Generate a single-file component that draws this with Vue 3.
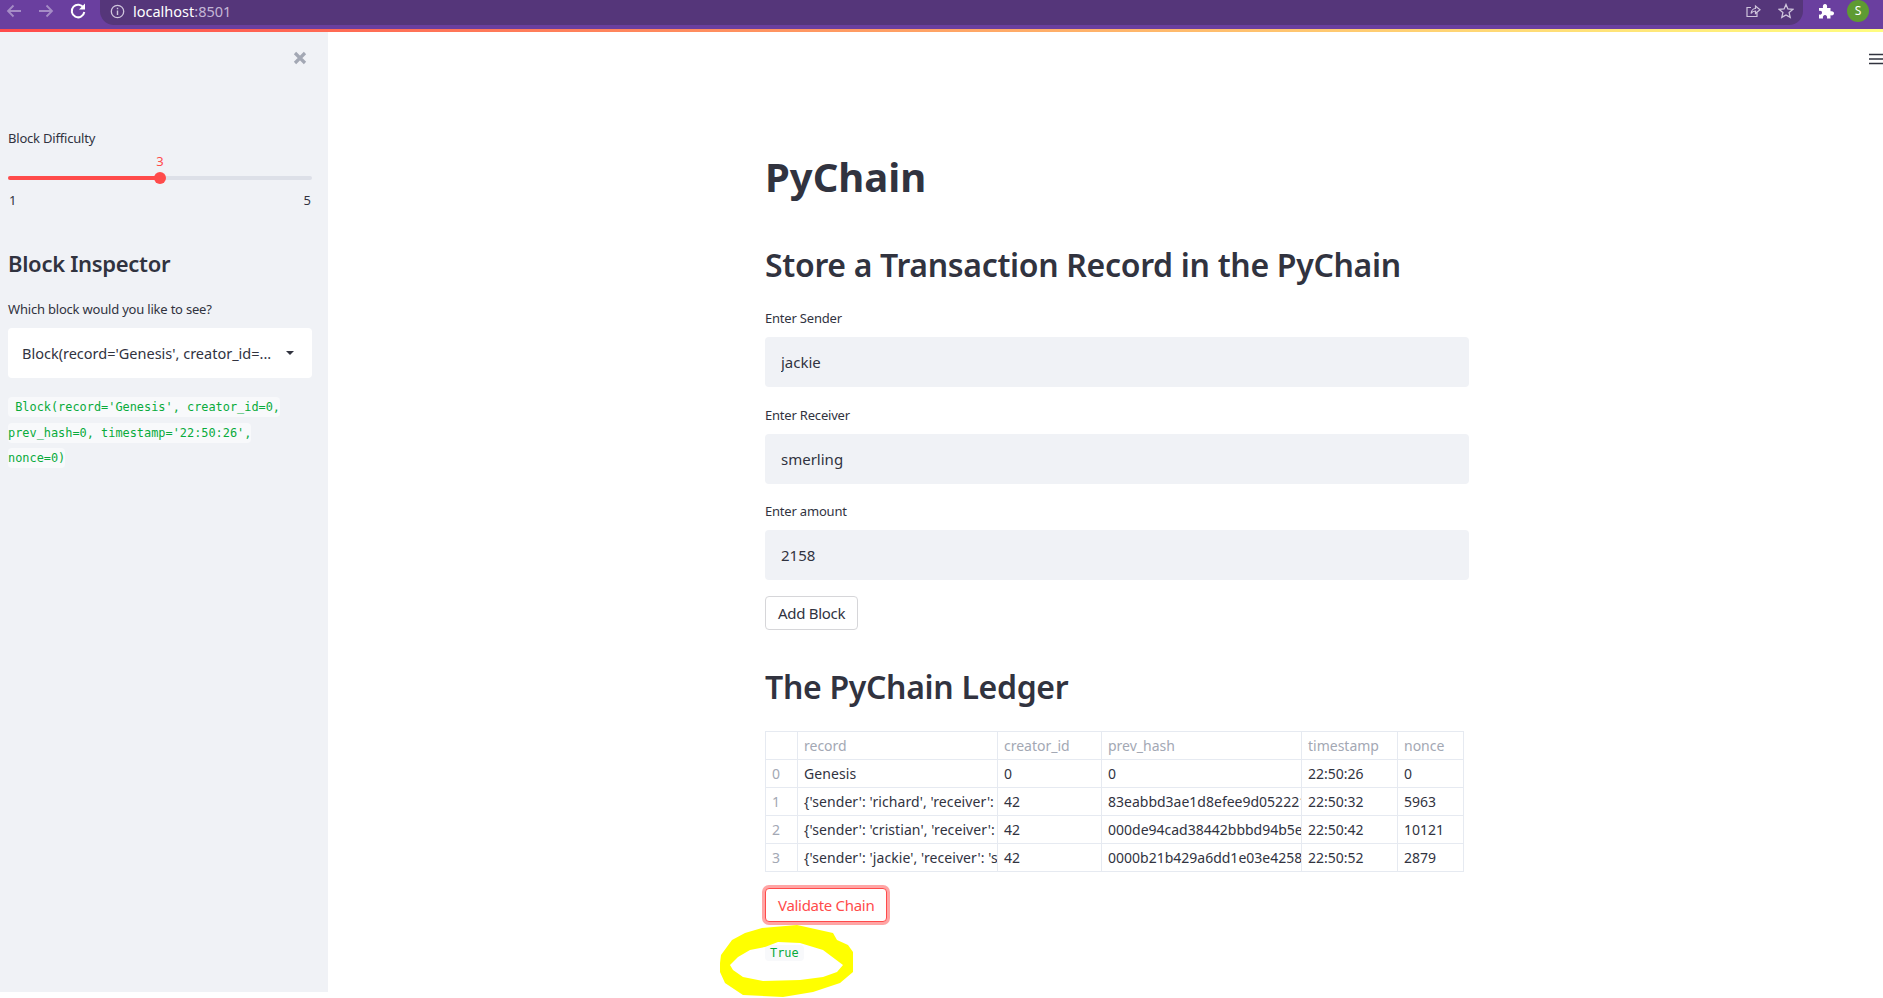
<script setup>
import { ref, computed } from 'vue'

const difficulty = ref(3)
const sliderPct = computed(() => ((difficulty.value - 1) / 4) * 100)

const fields = [
  { label: 'Enter Sender', value: 'jackie' },
  { label: 'Enter Receiver', value: 'smerling' },
  { label: 'Enter amount', value: '2158' },
]

const columns = ['', 'record', 'creator_id', 'prev_hash', 'timestamp', 'nonce']

const rows = [
  ['0', 'Genesis', '0', '0', '22:50:26', '0'],
  ['1', "{'sender': 'richard', 'receiver': 'cristian', 'amount': 100}", '42', '83eabbd3ae1d8efee9d052221f7c0a', '22:50:32', '5963'],
  ['2', "{'sender': 'cristian', 'receiver': 'jackie', 'amount': 250}", '42', '000de94cad38442bbbd94b5e61a2c7', '22:50:42', '10121'],
  ['3', "{'sender': 'jackie', 'receiver': 'smerling', 'amount': 2158}", '42', '0000b21b429a6dd1e03e42587d19fe', '22:50:52', '2879'],
]
</script>

<template>
  <div class="page">
    <div class="chrome">
      <svg class="nav dim" width="18" height="18" viewBox="0 0 18 18"><path d="M16 9H3M8.500 3.500 3 9l5.500 5.500" fill="none" stroke="currentColor" stroke-width="1.800"/></svg>
      <svg class="nav dim" width="18" height="18" viewBox="0 0 18 18"><path d="M2 9h13M9.500 3.500 15 9l-5.500 5.500" fill="none" stroke="currentColor" stroke-width="1.800"/></svg>
      <svg class="nav" width="18" height="18" viewBox="0 0 18 18"><path d="M14.600 6A6.300 6.300 0 1 0 15.300 10" fill="none" stroke="#fff" stroke-width="2"/><path d="M16 1.500V7.500H10Z" fill="#fff"/></svg>
      <div class="omnibox">
        <svg width="15" height="15" viewBox="0 0 15 15"><circle cx="7.500" cy="7.500" r="6.200" fill="none" stroke="#cfc5dc" stroke-width="1.300"/><path d="M7.500 6.500v4.500M7.500 3.800v1.400" stroke="#cfc5dc" stroke-width="1.400"/></svg>
        <span class="url">localhost<span class="port">:8501</span></span>
        <span class="spacer"></span>
        <svg width="16" height="16" viewBox="0 0 16 16"><path d="M12 9.500V13.500H2V4.500H6M6 10.500C6.500 7 9 5.500 10.500 5.500V3L15 6.800 10.500 10.500V8C8.500 8 7 9 6 10.500Z" fill="none" stroke="#cfc5dc" stroke-width="1.200"/></svg>
        <svg width="16" height="16" viewBox="0 0 16 16"><path d="M8 1.500 9.900 6 14.800 6.400 11.100 9.600 12.200 14.400 8 11.900 3.800 14.400 4.900 9.600 1.200 6.400 6.100 6Z" fill="none" stroke="#cfc5dc" stroke-width="1.300"/></svg>
      </div>
      <svg class="puzzle" width="16" height="16" viewBox="0 0 16 16"><path d="M1 5H5C4.400 2.500 5.500 1 7 1S9.600 2.500 9 5H12.500V8.300C15 7.800 16 9 16 10.300S15 12.800 12.500 12.300V15.500H9C9.500 13.200 8.400 12 7 12S4.500 13.200 5 15.500H1V11.500C3 12 4 11 4 9.700S3 7.500 1 8Z" fill="#fff"/></svg>
      <div class="avatar">S</div>
    </div>
    <div class="decoration"></div>

    <div class="body">
      <aside class="sidebar">
        <svg class="close" width="14" height="14" viewBox="0 0 14 14"><path d="M2 2 12 12M12 2 2 12" stroke="#a3a8b4" stroke-width="3.200"/></svg>

        <label class="widget-label difficulty">Block Difficulty</label>
        <div class="slider">
          <span class="slider-value" :style="{ left: sliderPct + '%' }">{{ difficulty }}</span>
          <div class="track">
            <div class="fill" :style="{ width: sliderPct + '%' }"></div>
            <div class="thumb" :style="{ left: sliderPct + '%' }"></div>
          </div>
        </div>
        <div class="ticks"><span>1</span><span>5</span></div>

        <h3 class="side-title">Block Inspector</h3>
        <label class="widget-label">Which block would you like to see?</label>
        <div class="select">
          <span class="select-text">Block(record='Genesis', creator_id=...</span>
          <span class="caret"></span>
        </div>
        <p class="code-block">
          <code>&nbsp;Block(record='Genesis', creator_id=0, prev_hash=0, timestamp='22:50:26', nonce=0)</code>
        </p>
      </aside>

      <main class="main">
        <svg class="burger" width="14" height="12" viewBox="0 0 14 12"><path d="M0 1.500H14M0 6H14M0 10.500H14" stroke="#31333f" stroke-width="1.600"/></svg>

        <div class="content">
          <h1>PyChain</h1>
          <h2 class="store">Store a Transaction Record in the PyChain</h2>

          <div v-for="f in fields" :key="f.label" class="field">
            <label class="widget-label">{{ f.label }}</label>
            <input class="text-input" type="text" :value="f.value" readonly />
          </div>

          <button type="button" class="btn add">Add Block</button>

          <h2 class="ledger">The PyChain Ledger</h2>

          <table class="frame">
            <colgroup>
              <col class="c-idx" /><col class="c-rec" /><col class="c-cre" /><col class="c-pre" /><col class="c-tim" /><col class="c-non" />
            </colgroup>
            <thead>
              <tr><th v-for="c in columns" :key="c">{{ c }}</th></tr>
            </thead>
            <tbody>
              <tr v-for="r in rows" :key="r[0]">
                <td v-for="(cell, i) in r" :key="i" :class="{ idx: i === 0, rec: i === 1 }">{{ cell }}</td>
              </tr>
            </tbody>
          </table>

          <button type="button" class="btn validate">Validate Chain</button>
          <p class="result"><code>True</code></p>
        </div>

        <svg class="scribble" width="134" height="73" viewBox="0 0 134 73">
          <path fill="#ffff00" fill-rule="evenodd" d="M0 38 1 30 12 15 25 8 42 3 77 0 113 8 117 15 128 20 133 27 133 47 120 58 93 67 63 72 23 70 5 58 0 47ZM10 40 18 32 30 25 45 22 58 17 80 18 103 25 123 40 117 47 103 52 80 55 43 56 23 52 13 45Z"/>
        </svg>
      </main>
    </div>
  </div>
</template>

<style>
html, body { margin: 0; background: #fff; overflow: hidden; }
</style>

<style scoped>
.page {
  height: 998px;
  display: flex;
  flex-direction: column;
  font-family: "Noto Sans", "Liberation Sans", sans-serif;
  color: #31333f;
  overflow: hidden;
}

/* browser bar */
.chrome {
  height: 29px;
  flex: none;
  box-sizing: border-box;
  display: flex;
  align-items: center;
  background: #6a3f9f;
  padding: 0 0 7px 5px;
}
.nav { margin-right: 14px; flex: none; }
.nav.dim { color: #a58cc6; }
.omnibox {
  height: 28px;
  margin-left: -1px;
  flex: 1;
  display: flex;
  align-items: center;
  gap: 8px;
  padding: 0 9px 0 10px;
  background: #55367a;
  border-radius: 0 0 14px 14px;
}
.url { color: #fff; font-size: 14.500px; }
.port { color: #c4b6d6; }
.spacer { flex: 1; }
.omnibox svg + svg { margin-left: 9px; }
.puzzle { margin: 0 0 0 15px; flex: none; }
.avatar {
  width: 22px;
  height: 22px;
  margin: 0 14px 0 13px;
  flex: none;
  border-radius: 50%;
  background: #5e9b32;
  color: #fff;
  font-size: 12px;
  line-height: 22px;
  text-align: center;
}
.decoration {
  height: 3px;
  flex: none;
  background: linear-gradient(90deg, #ff4b4b, #fffd80);
}

.body { flex: none; height: 960px; display: flex; }

/* sidebar */
.sidebar {
  position: relative;
  width: 328px;
  flex: none;
  box-sizing: border-box;
  padding: 97px 16px 0 8px;
  background: #f0f2f6;
}
.close { position: absolute; top: 19px; right: 21px; }
.widget-label {
  display: block;
  font-size: 13px;
  line-height: 18px;
  letter-spacing: -0.2px;
}
.slider { position: relative; margin-top: 23px; height: 16px; }
.slider-value {
  position: absolute;
  top: -18px;
  transform: translateX(-50%);
  font-size: 13px;
  line-height: 18px;
  color: #ff4b4b;
}
.track {
  position: absolute;
  top: 6px;
  left: 0;
  right: 0;
  height: 4px;
  border-radius: 2px;
  background: #dde0e8;
}
.fill { height: 100%; border-radius: 2px; background: #ff4b4b; }
.thumb {
  position: absolute;
  top: -4px;
  width: 12px;
  height: 12px;
  margin-left: -6px;
  border-radius: 50%;
  background: #ff4b4b;
}
.ticks {
  display: flex;
  justify-content: space-between;
  margin-top: 5px;
  padding: 0 1px;
  font-size: 13px;
  line-height: 18px;
}
.side-title {
  margin: 38px 0 21px;
  font-size: 22px;
  line-height: 32px;
  font-weight: 600;
  letter-spacing: -0.3px;
}
.select {
  display: flex;
  align-items: center;
  height: 50px;
  margin-top: 10px;
  padding: 0 18px 0 14px;
  background: #fff;
  border-radius: 4px;
}
.select-text {
  flex: 1;
  font-size: 14.500px;
  white-space: nowrap;
  overflow: hidden;
}
.caret {
  width: 0;
  height: 0;
  margin-left: 10px;
  border: 4px solid transparent;
  border-top: 4px solid #31333f;
  border-bottom: 0;
}
.code-block {
  margin: 17px 0 0;
  font-family: "DejaVu Sans Mono", "Liberation Mono", monospace;
  font-size: 11.900px;
  line-height: 25.600px;
}
code {
  font-family: "DejaVu Sans Mono", "Liberation Mono", monospace;
  font-size: 11.900px;
  color: #09ab3b;
  background: #f8f9fb;
  border-radius: 4px;
  padding: 3px 0;
  -webkit-box-decoration-break: clone;
  box-decoration-break: clone;
}

/* main column */
.main { position: relative; flex: 1; min-width: 0; }
.burger { position: absolute; top: 21px; right: 0; }
.content {
  width: 704px;
  margin-left: 437px;
  padding-top: 121px;
}
h1 {
  margin: 0;
  font-size: 40px;
  line-height: 48px;
  font-weight: 700;
}
h2 {
  margin: 0;
  font-size: 32px;
  line-height: 44px;
  font-weight: 600;
  letter-spacing: -0.32px;
}
.store { margin-top: 42px; }
.field { margin-top: 0; }
.store + .field { margin-top: 22px; }
.field + .field { margin-top: 18.500px; }
.field .widget-label { margin-bottom: 10px; }
.text-input {
  display: block;
  width: 100%;
  height: 50px;
  box-sizing: border-box;
  padding: 0 16px;
  border: 0;
  border-radius: 4px;
  outline: 0;
  background: #f0f2f6;
  color: #31333f;
  font-family: inherit;
  font-size: 15px;
}
.btn {
  display: block;
  height: 34px;
  padding: 0 12px;
  background: #fff;
  border: 1px solid #d6d6d9;
  border-radius: 4px;
  color: #31333f;
  font-family: inherit;
  font-size: 15px;
  letter-spacing: -0.3px;
}
.add { margin-top: 16px; }
.ledger { margin-top: 35px; }

.frame {
  width: 698px;
  margin-top: 22px;
  border-collapse: collapse;
  table-layout: fixed;
  font-size: 14px;
}
.c-idx { width: 32px; }
.c-rec { width: 200px; }
.c-cre { width: 104px; }
.c-pre { width: 200px; }
.c-tim { width: 96px; }
.c-non { width: 66px; }
th, td {
  height: 28px;
  box-sizing: border-box;
  padding: 0 0 0 6px;
  border: 1px solid #e6eaf1;
  text-align: left;
  font-weight: 400;
  white-space: nowrap;
  overflow: hidden;
}
th, td.idx { color: #a3a8b4; }
td.rec { letter-spacing: 0.08px; }

.validate {
  margin-top: 16px;
  border-color: #ff4b4b;
  color: #ff4b4b;
  box-shadow: 0 0 0 3px rgba(255, 75, 75, 0.5);
}
.result { margin: 22px 0 0; line-height: 14px; }
.result code { padding: 1px 5px; }

.scribble { position: absolute; left: 392px; top: 893px; }
</style>
